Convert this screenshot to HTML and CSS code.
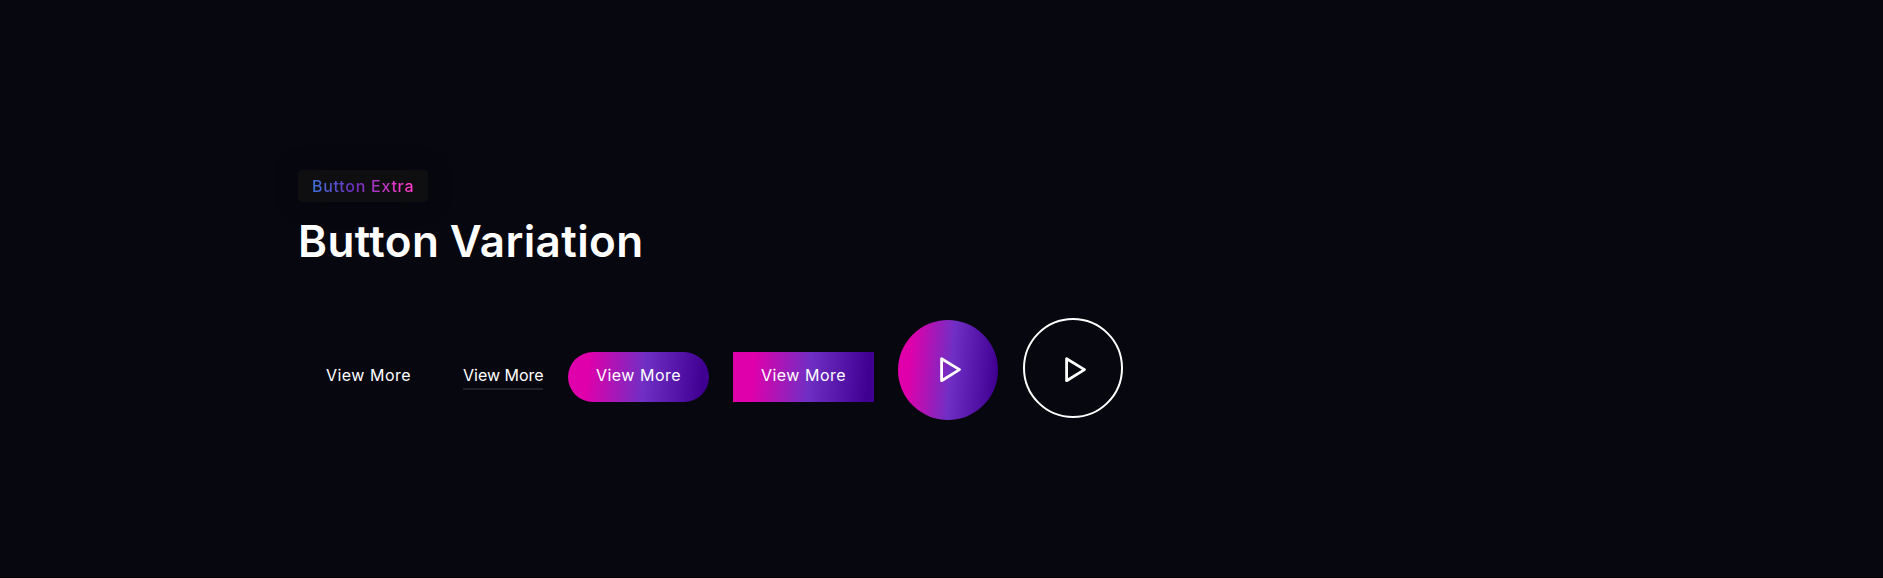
FILE: index.html
```html
<!DOCTYPE html>
<html lang="en">
<head>
<meta charset="utf-8">
<title>Button Variation</title>
<link rel="stylesheet" href="styles.css">
</head>
<body>
<section class="buttons-section">
  <span class="subtitle"><span class="subtitle-text">Button Extra</span></span>
  <h2 class="title">Button Variation</h2>
  <div class="button-group">
    <a class="btn btn-plain">View More</a>
    <a class="btn-link">View More</a>
    <a class="btn btn-gradient btn-round">View More</a>
    <a class="btn btn-gradient">View More</a>
    <a class="play play-gradient"><svg class="play-icon" viewBox="0 0 24 28"><path d="M2.6 2.7v22L20.5 13.6z"/></svg></a>
    <a class="play play-border"><svg class="play-icon" viewBox="0 0 24 28"><path d="M2.6 2.7v22L20.5 13.6z"/></svg></a>
  </div>
</section>
</body>
</html>
```
FILE: styles.css
```css
* { box-sizing: border-box; }
body {
  margin: 0;
  height: 578px;
  overflow: hidden;
  background: #000;
  color: #fff;
  font-family: Inter, sans-serif;
}
.buttons-section {
  display: flex;
  flex-direction: column;
  align-items: flex-start;
  height: 577px;
  padding: 170px 298px 0;
  background: #070710;
}
.subtitle {
  width: 130px;
  height: 32px;
  padding: 0 14px;
  border-radius: 4px;
  background: #0f0f11;
  box-shadow: 0 0 25px rgba(0, 0, 0, 0.3);
  font-size: 16px;
  font-weight: 500;
  line-height: 33px;
  letter-spacing: 0.73px;
  white-space: nowrap;
}
.subtitle-text {
  display: block;
  background: linear-gradient(95deg, #3b74d8 0%, #702fc0 42%, #ff3bc9 92%);
  -webkit-background-clip: text;
  background-clip: text;
  color: transparent;
}
.title {
  margin: 10px 0 0;
  font-size: 44px;
  font-weight: 600;
  line-height: 58px;
  letter-spacing: 0.4px;
  word-spacing: -1px;
}
.button-group {
  display: flex;
  align-items: flex-start;
  margin-top: 48px;
}
.btn {
  width: 141px;
  height: 50px;
  margin-top: 34px;
  font-size: 16px;
  font-weight: 400;
  line-height: 47px;
  letter-spacing: 0.5px;
  text-align: center;
}
.btn-link {
  width: 80px;
  height: 38px;
  margin: 34px 25px 0 24px;
  border-bottom: 2px solid #20202a;
  font-size: 16px;
  line-height: 47px;
  white-space: nowrap;
}
.btn-gradient {
  margin-right: 24px;
  background: linear-gradient(95deg, #df00ab 15%, #702fc4 54%, #3f0092 95%);
}
.btn-round { border-radius: 25px; }
.play {
  display: flex;
  align-items: center;
  justify-content: center;
  width: 100px;
  height: 100px;
  padding-left: 5px;
  border-radius: 50%;
}
.play-gradient {
  margin: 2px 25px 0 0;
  background: linear-gradient(95deg, #df00ab 14%, #702fc4 53%, #3f0092 96%);
}
.play-border {
  padding: 4px 0 0 5px;
  border: 2px solid #fff;
}
.play-icon {
  width: 24px;
  height: 28px;
  fill: none;
  stroke: #fff;
  stroke-width: 2.8;
  stroke-linejoin: round;
}
```
